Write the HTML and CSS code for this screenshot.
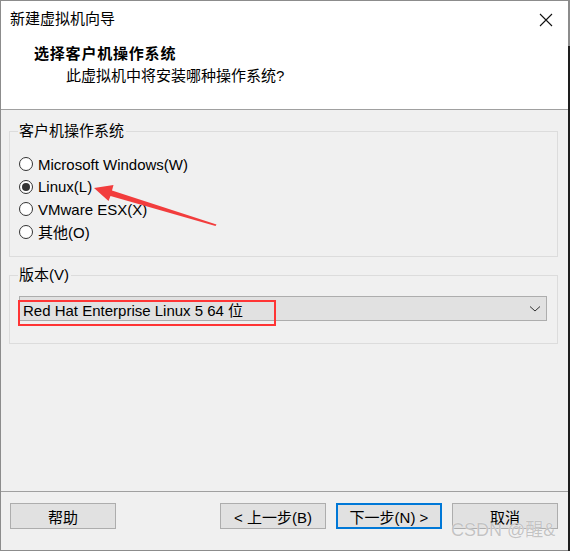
FILE: index.html
```html
<!DOCTYPE html>
<html lang="zh-CN">
<head>
    <meta charset="UTF-8">
    <title>新建虚拟机向导</title>
    <link rel="stylesheet" href="styles.css">
</head>
<body>
    <div class="window">
        <div class="header">
            <div class="titlebar">
                <span class="title">新建虚拟机向导</span>
                <svg class="close" width="14" height="14" viewBox="0 0 14 14">
                    <path d="M1 1 L13 13 M13 1 L1 13" stroke="#111" stroke-width="1.1" fill="none"/>
                </svg>
            </div>
            <h1>选择客户机操作系统</h1>
            <p class="subtitle">此虚拟机中将安装哪种操作系统?</p>
        </div>

        <main class="content">
            <fieldset class="group os-group">
                <legend>客户机操作系统</legend>
                <label class="radio"><input type="radio" name="os"> Microsoft Windows(W)</label>
                <label class="radio"><input type="radio" name="os" checked> Linux(L)</label>
                <label class="radio"><input type="radio" name="os"> VMware ESX(X)</label>
                <label class="radio"><input type="radio" name="os"> 其他(O)</label>
            </fieldset>

            <fieldset class="group version-group">
                <legend>版本(V)</legend>
                <div class="select">
                    <span>Red Hat Enterprise Linux 5 64 位</span>
                    <svg width="12" height="8" viewBox="0 0 12 8">
                        <path d="M1 1.5 L6 6 L11 1.5" stroke="#333" stroke-width="1" fill="none"/>
                    </svg>
                </div>
            </fieldset>
        </main>

        <footer class="footer">
            <button class="btn">帮助</button>
            <div class="nav-buttons">
                <button class="btn">&lt; 上一步(B)</button>
                <button class="btn default">下一步(N) &gt;</button>
                <button class="btn">取消</button>
            </div>
        </footer>

        <!-- 标注 -->
        <svg class="annotation" width="570" height="551" viewBox="0 0 570 551">
            <polygon points="94,188 113.5,185 112,190.5 216.5,224.5 215.5,226 110.5,196 108.5,201" fill="#f23d3d"/>
            <rect x="19" y="301" width="256" height="24" fill="none" stroke="#ff3535" stroke-width="2"/>
        </svg>
        <span class="watermark">CSDN @醒&amp;</span>
    </div>
</body>
</html>
```

FILE: styles.css
```css
/* 全局 */
body {
    margin: 0;
    font-family: "Liberation Sans", "Noto Sans CJK SC", sans-serif;
    font-size: 15px;
    color: #000;
}

.window {
    position: relative;
    width: 570px;
    height: 551px;
    box-sizing: border-box;
    border: 1px solid #8c8c8c;
    border-right-width: 2px;
    background: #f0f0f0;
    display: flex;
    flex-direction: column;
}
.window::after {
    content: "";
    position: absolute;
    right: -2px;
    top: 45px;
    bottom: -1px;
    width: 2px;
    background: #1e1e1e;
}

/* 标题区域 */
.header {
    background: #fff;
    height: 108px;
    border-bottom: 1px solid #a0a0a0;
    flex-shrink: 0;
}
.titlebar {
    display: flex;
    justify-content: space-between;
    align-items: center;
    height: 36px;
    padding: 0 15px 0 9px;
}
.title {
    line-height: 36px;
}
.close {
    margin-top: 1px;
}
.header h1 {
    margin: 6px 0 0 33px;
    font-size: 15px;
    font-weight: bold;
    letter-spacing: 0.8px;
    line-height: 22px;
}
.subtitle {
    margin: 0 0 0 65px;
    line-height: 22px;
}

/* 内容 */
.content {
    flex-grow: 1;
    padding: 11px 10px 0 8px;
}
.group {
    margin: 0;
    border: 1px solid #dcdcdc;
    padding: 0 10px 0 9px;
}
.group legend {
    padding: 0 2px 0 1px;
    margin-left: -1px;
    line-height: 20px;
}
.os-group {
    height: 122px;
    padding-top: 12px;
}
.version-group {
    margin-top: 8px;
    height: 66px;
    padding-top: 11px;
}

.radio {
    display: flex;
    align-items: center;
    gap: 5px;
    height: 22.5px;
}
.radio input {
    appearance: none;
    margin: 0;
    width: 14px;
    height: 14px;
    border: 1px solid #333;
    border-radius: 50%;
    background: #fff;
    box-sizing: border-box;
    display: grid;
    place-content: center;
}
.radio input:checked::before {
    content: "";
    width: 8px;
    height: 8px;
    border-radius: 50%;
    background: #333;
}

.select {
    display: flex;
    justify-content: space-between;
    align-items: center;
    height: 25px;
    box-sizing: border-box;
    border: 1px solid #adadad;
    background: #e1e1e1;
    padding: 0 5px 0 3px;
}
.select span {
    line-height: 23px;
    padding-top: 3px;
}

/* 底部按钮 */
.footer {
    flex-shrink: 0;
    border-top: 1px solid #a0a0a0;
    height: 47px;
    display: flex;
    justify-content: space-between;
    padding: 11px 10px 0 9px;
}
.nav-buttons {
    display: flex;
    gap: 10px;
}
.btn {
    font-family: inherit;
    font-size: 15px;
    width: 106px;
    height: 26px;
    padding: 0;
    border: 1px solid #adadad;
    background: #e1e1e1;
    color: #000;
}
.btn.default {
    border: 2px solid #0078d7;
}

/* 标注与水印 */
.annotation {
    position: absolute;
    left: -1px;
    top: -1px;
    pointer-events: none;
}
.watermark {
    position: absolute;
    left: 450px;
    top: 514px;
    font-family: "Liberation Sans", "Noto Sans CJK SC", sans-serif;
    font-size: 18px;
    color: rgba(185, 185, 185, 0.85);
    text-shadow: 0 0 1px #fff;
    pointer-events: none;
}
```
